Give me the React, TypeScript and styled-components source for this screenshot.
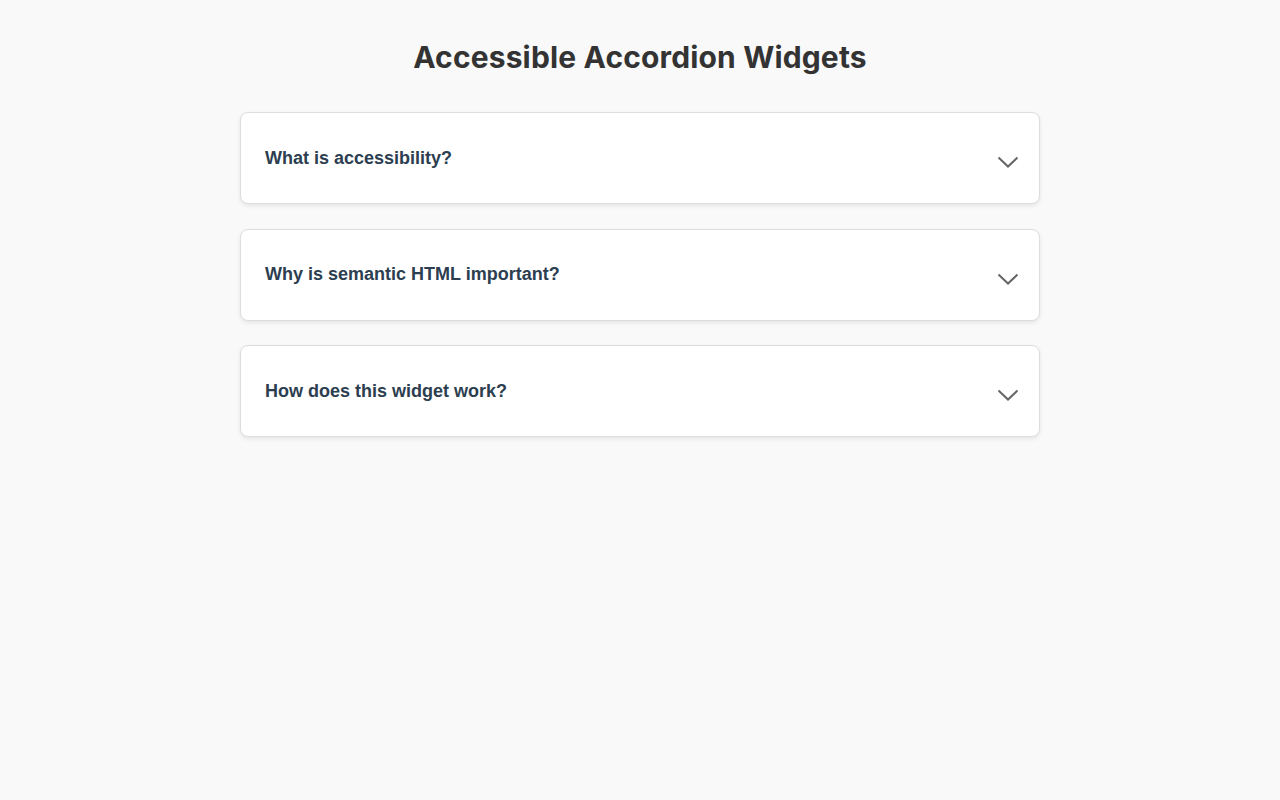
import { useState } from 'react'
import styled, { createGlobalStyle } from 'styled-components'

const GlobalStyle = createGlobalStyle`
  body {
    margin: 0;
    background: #f9f9f9;
    font-family: 'Liberation Sans', Arial, sans-serif;
  }
`

const ITEMS = [
  {
    id: 'a11y',
    question: 'What is accessibility?',
    answer:
      'Accessibility means designing products so that people with disabilities can perceive, understand, navigate and interact with them.',
  },
  {
    id: 'semantic',
    question: 'Why is semantic HTML important?',
    answer:
      'Semantic HTML gives assistive technologies the structure and meaning they need to present content correctly.',
  },
  {
    id: 'widget',
    question: 'How does this widget work?',
    answer:
      'Each header is a button that toggles its panel and updates aria-expanded so screen readers announce the state.',
  },
]

const St = {
  Page: styled.main`
    max-width: 800px;
    margin: 0 auto;
    padding: 37px 0 40px;
  `,
  Title: styled.h1`
    margin: 0 0 35px;
    text-align: center;
    font-family: Inter, 'Liberation Sans', sans-serif;
    font-size: 30px;
    font-weight: 700;
    line-height: 40px;
    letter-spacing: 0.15px;
    color: #333;
  `,
  List: styled.div`
    display: flex;
    flex-direction: column;
    gap: 24.5px;
  `,
  Item: styled.section`
    background: #fff;
    border: 1px solid #ddd;
    border-radius: 8px;
    box-shadow: 0 2px 4px rgba(0, 0, 0, 0.08);
    overflow: hidden;
  `,
  Header: styled.button`
    display: flex;
    align-items: center;
    justify-content: space-between;
    width: 100%;
    height: 90px;
    padding: 0 20px 0 24px;
    border: 0;
    background: transparent;
    cursor: pointer;
    text-align: left;
    font-family: 'Liberation Sans', Arial, sans-serif;
    font-size: 18px;
    font-weight: 700;
    color: #2c3e50;
  `,
  Chevron: styled.svg<{ open: boolean }>`
    flex: none;
    margin-top: 8px;
    transform: rotate(${({ open }) => (open ? '180deg' : '0deg')});
    transition: transform 0.2s;
  `,
  Panel: styled.div`
    padding: 0 24px 24px;
    font-size: 16px;
    line-height: 1.5;
    color: #555;
  `,
}

const App = () => {
  const [openId, setOpenId] = useState<string | null>(null)

  return (
    <>
      <GlobalStyle />
      <St.Page>
        <St.Title>Accessible Accordion Widgets</St.Title>
        <St.List>
          {ITEMS.map((item) => {
            const open = openId === item.id
            return (
              <St.Item key={item.id}>
                <St.Header
                  aria-expanded={open}
                  aria-controls={`panel-${item.id}`}
                  onClick={() => setOpenId(open ? null : item.id)}
                >
                  <span>{item.question}</span>
                  <St.Chevron open={open} width="22" height="12" viewBox="0 0 22 12" aria-hidden="true">
                    <polyline points="1.5,1.5 11,10.5 20.5,1.5" fill="none" stroke="#666" strokeWidth="2" />
                  </St.Chevron>
                </St.Header>
                {open && <St.Panel id={`panel-${item.id}`}>{item.answer}</St.Panel>}
              </St.Item>
            )
          })}
        </St.List>
      </St.Page>
    </>
  )
}

export default App
